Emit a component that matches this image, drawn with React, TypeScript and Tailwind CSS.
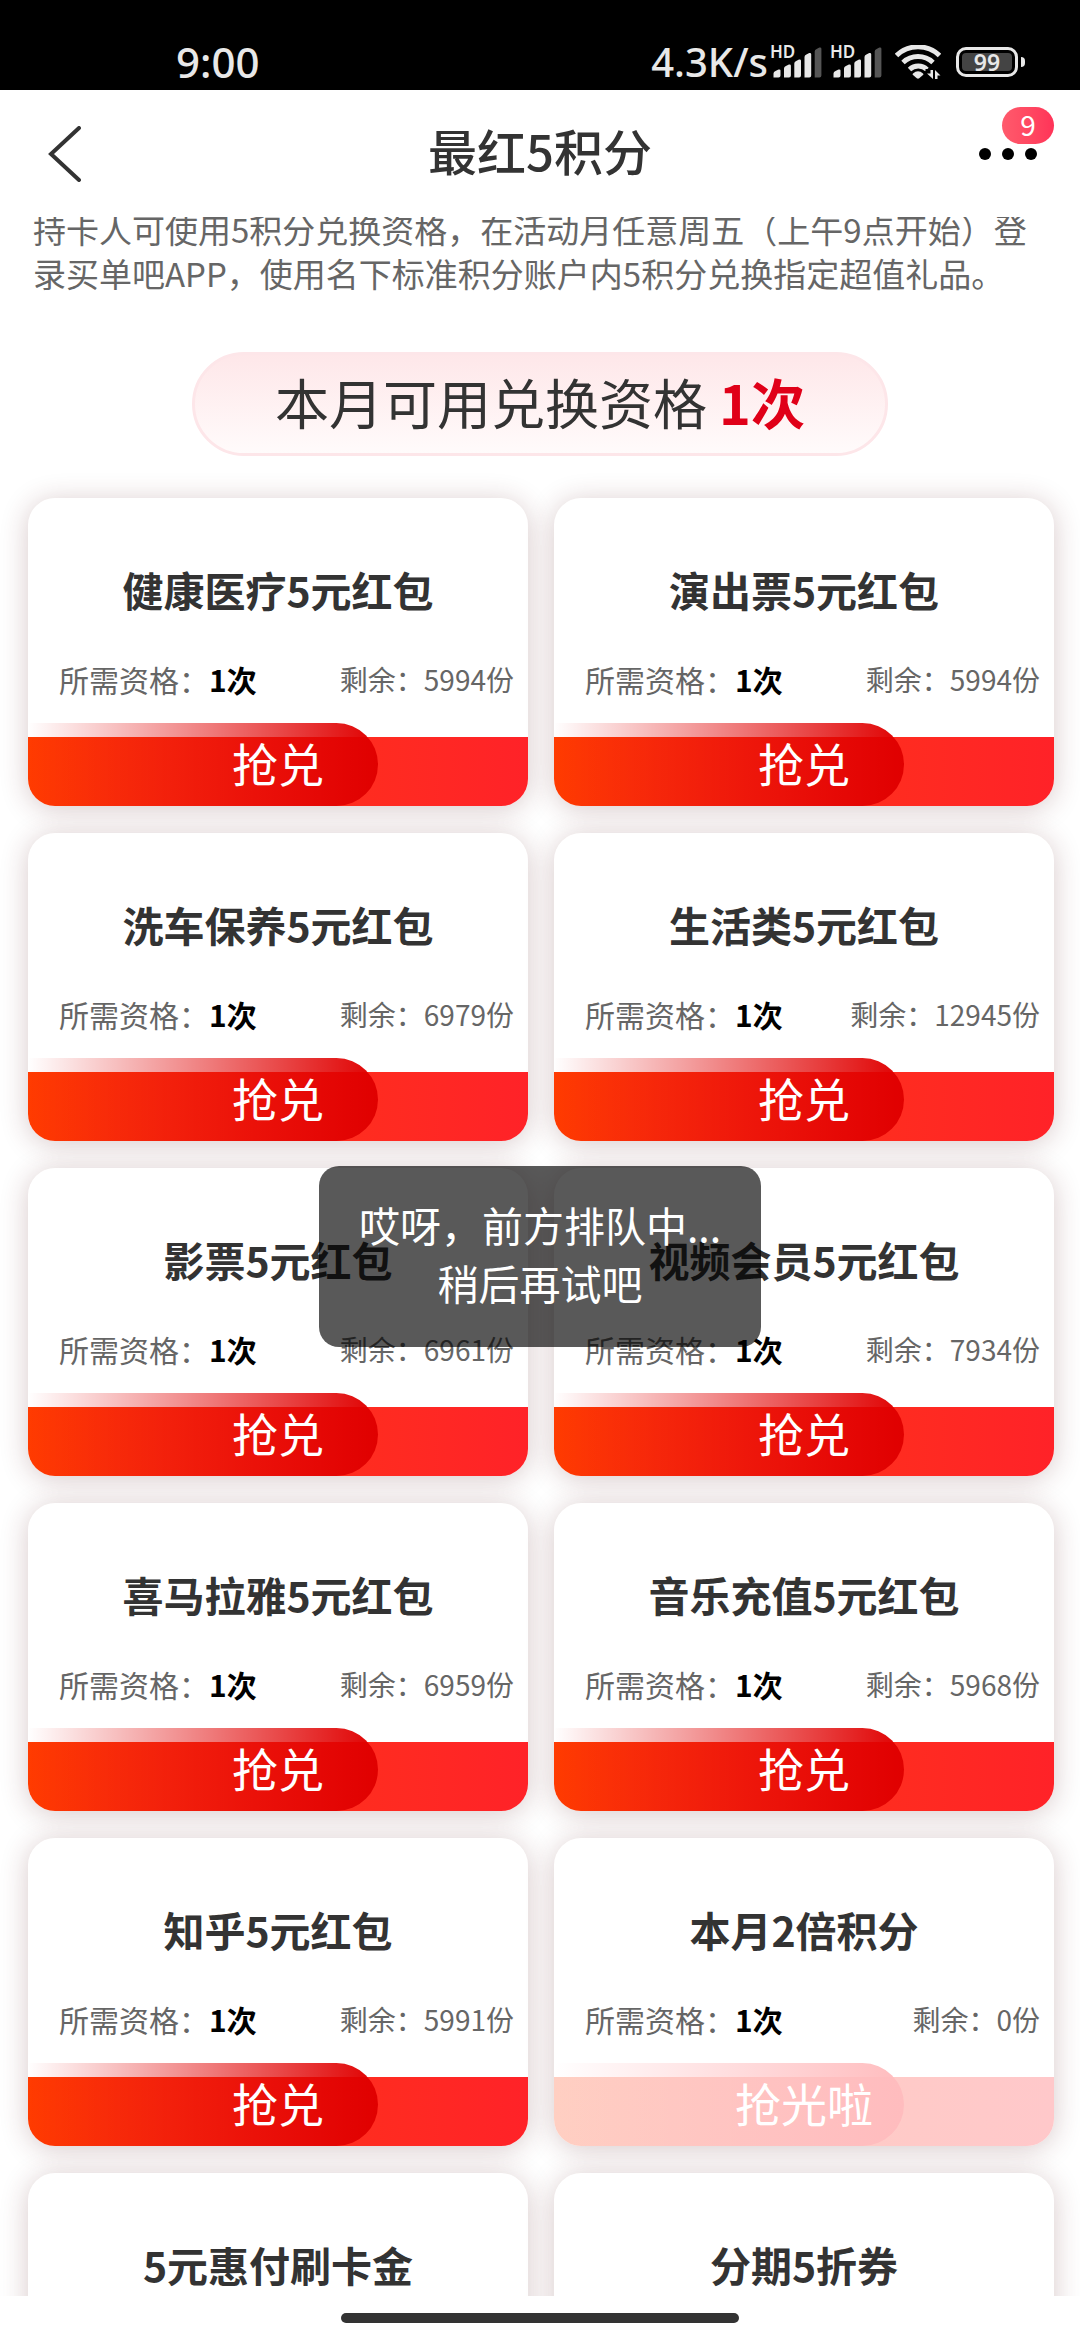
import clsx from "clsx";

type Gift = {
  title: string;
  left?: number;
};

const gifts: Gift[] = [
  { title: "健康医疗5元红包", left: 5994 },
  { title: "演出票5元红包", left: 5994 },
  { title: "洗车保养5元红包", left: 6979 },
  { title: "生活类5元红包", left: 12945 },
  { title: "影票5元红包", left: 6961 },
  { title: "视频会员5元红包", left: 7934 },
  { title: "喜马拉雅5元红包", left: 6959 },
  { title: "音乐充值5元红包", left: 5968 },
  { title: "知乎5元红包", left: 5991 },
  { title: "本月2倍积分", left: 0 },
  { title: "5元惠付刷卡金" },
  { title: "分期5折券" }
];

function Signal() {
  return (
    <div className="relative h-8 w-[50px]">
      <span className="absolute -left-[2px] -top-[1px] text-[17px] leading-[14px] font-semibold">
        HD
      </span>
      <svg className="h-8 w-[50px]" viewBox="0 0 50 32" fill="currentColor">
        <path d="M1.500 31.500v-4q0-2 2-2.600l3-1.400q2-.5 2 1v5q0 2-2 2z" />
        <path d="M12 31.500v-9q0-2 1.900-2.600l3-1.300q2-.4 2 1.200v9.700q0 2-2 2z" />
        <path d="M22.300 31.500v-14q0-2 1.900-2.600l2.800-1.300q2-.4 2 1.200v14.700q0 2-2 2z" />
        <path d="M32.500 31.500V11q0-2 1.900-2.600l2.800-1.300q2-.4 2 1.200v21.200q0 2-2 2z" />
        <path
          className="text-[#555555]"
          d="M42.700 31.500V5.500q0-2 1.900-2.600l2.800-1.300q2-.4 2 1.200v26.700q0 2-2 2z"
        />
      </svg>
    </div>
  );
}

function Wifi() {
  return (
    <svg className="h-[34px] w-[46px]" viewBox="0 0 46 34" fill="none">
      <g stroke="currentColor" strokeWidth="5">
        <path d="M1.500 10.500a31 31 0 0 1 43 0" />
        <path d="M8 17.500a22 22 0 0 1 30 0" />
        <path d="M14.500 24.500a13 13 0 0 1 17.500 0" />
      </g>
      <path
        fill="currentColor"
        d="M18 28.500q5-4.500 10 0q.8.8 0 1.600l-3.800 3.200q-1.200.9-2.400 0L18 30.100q-.8-.8 0-1.600z"
      />
      <path fill="#000" d="M30.500 24h16V34h-16z" />
      <path fill="currentColor" d="M35.500 25H38v9l-6-5.500h3.500z" />
      <path fill="currentColor" d="M42.500 34H40v-9l5.500 5.500h-3z" />
    </svg>
  );
}

function Battery() {
  return (
    <div className="flex items-center gap-[3px]">
      <div className="flex h-[30px] w-[62px] rounded-[10px] border-3 border-current p-[3px]">
        <span className="flex flex-1 items-center justify-center rounded-[4px] bg-[#444444] text-[23px] leading-none font-semibold">
          99
        </span>
      </div>
      <span className="h-[10px] w-1 rounded-r-sm bg-current" />
    </div>
  );
}

function StatusBar() {
  return (
    <div className="flex h-[90px] shrink-0 items-center justify-between bg-black pt-[34px] pr-[55px] pl-[176px] font-['Noto_Sans',sans-serif] text-[#e8e8e8]">
      <span className="text-[42px] leading-none font-medium">9:00</span>
      <div className="flex items-center">
        <span className="mr-1 text-[40px] leading-none font-medium">4.3K/s</span>
        <Signal />
        <span className="w-[10px]" />
        <Signal />
        <span className="w-[13px]" />
        <Wifi />
        <span className="w-[15px]" />
        <Battery />
      </div>
    </div>
  );
}

function Header() {
  return (
    <header className="grid h-[127px] shrink-0 grid-cols-[1fr_auto_1fr] items-center bg-white px-[26px]">
      <button type="button" aria-label="返回" className="justify-self-start pl-[22px]">
        <svg className="h-14 w-[34px]" viewBox="0 0 34 56" fill="none">
          <path
            d="M31 2L3 28l28 26"
            stroke="#333333"
            strokeWidth="4"
            strokeLinecap="round"
          />
        </svg>
      </button>
      <h1 className="pb-2 text-[49px] leading-[60px] font-medium text-[#333333]">
        最红5积分
      </h1>
      <button
        type="button"
        aria-label="更多"
        className="relative flex h-24 w-[75px] items-center gap-[11px] justify-self-end"
      >
        <span className="size-3 rounded-full bg-black" />
        <span className="size-3 rounded-full bg-black" />
        <span className="size-3 rounded-full bg-black" />
        <span className="absolute top-px right-0 flex h-[37px] w-[52px] items-center justify-center rounded-full bg-linear-to-r from-[#ff5a6c] to-[#ff3358] pb-[2px] text-[28px] leading-none text-white">
          9
        </span>
      </button>
    </header>
  );
}

function GiftCard({ title, left }: Gift) {
  const soldOut = left === 0;

  return (
    <li className="flex min-h-[308px] flex-col overflow-hidden rounded-[27px] bg-white pt-[61px] shadow-[0_3px_28px_rgba(90,30,35,0.24)]">
      <h2 className="text-center text-[41px] leading-[60px] font-bold text-[#333333]">
        {title}
      </h2>
      {left !== undefined && (
        <>
          <div className="mt-[38px] flex items-center justify-between pr-[14px] pl-[31px] leading-[44px] text-[#666666]">
            <p className="text-[30px]">
              所需资格：<b className="font-bold text-black">1次</b>
            </p>
            <p className="text-[28px]">剩余：{left}份</p>
          </div>
          <button
            type="button"
            disabled={soldOut}
            className="relative mt-[22px] h-[83px] w-full pb-[5px] text-[46px] leading-[78px] text-white"
          >
            <span
              className={clsx(
                "absolute inset-x-0 bottom-0 h-[69px] bg-linear-to-r",
                soldOut ? "from-[#ffcfc2] to-[#ffc8ca]" : "from-[#ff3b00] to-[#ff2228]"
              )}
            />
            <span
              className={clsx(
                "absolute inset-y-0 left-0 w-[70%] rounded-r-full bg-linear-to-r",
                soldOut
                  ? "from-[#ffbcbe]/0 to-[#ffbcbe]"
                  : "from-[#e00008]/0 to-[#e00000]"
              )}
            />
            <span className="relative">{soldOut ? "抢光啦" : "抢兑"}</span>
          </button>
        </>
      )}
    </li>
  );
}

export default function App() {
  return (
    <div className="flex h-screen flex-col bg-white font-['Noto_Sans_CJK_SC',sans-serif]">
      <StatusBar />
      <Header />

      <main className="relative min-h-0 flex-1 overflow-hidden">
        <p className="-mt-[10px] pr-12 pl-[33px] text-[33px] leading-[44px] text-[#666666]">
          持卡人可使用5积分兑换资格，在活动月任意周五（上午9点开始）登录买单吧APP，使用名下标准积分账户内5积分兑换指定超值礼品。
        </p>

        <p className="mx-auto mt-[57px] w-fit rounded-full border-3 border-[#fde6e9] bg-linear-to-b from-[#fee7e9] to-[#fffbfb] px-20 pb-1 text-[54px] leading-[94px] text-[#333333]">
          本月可用兑换资格 <b className="font-bold text-[#e00018]">1次</b>
        </p>

        <ul className="mt-[42px] grid grid-cols-2 gap-x-[26px] gap-y-[27px] pr-[26px] pl-7">
          {gifts.map((gift) => (
            <GiftCard key={gift.title} {...gift} />
          ))}
        </ul>

        {/* queue toast */}
        <div className="pointer-events-none absolute inset-0 flex items-center justify-center">
          <p
            role="status"
            className="rounded-[20px] bg-black/65 px-10 pt-[29px] pb-9 text-center text-[41px] leading-[58px] text-white"
          >
            哎呀，前方排队中...
            <br />
            稍后再试吧
          </p>
        </div>
      </main>

      <div className="flex h-11 shrink-0 items-center justify-center bg-white">
        <span className="h-[10px] w-[398px] rounded-full bg-[#333333]" />
      </div>
    </div>
  );
}
